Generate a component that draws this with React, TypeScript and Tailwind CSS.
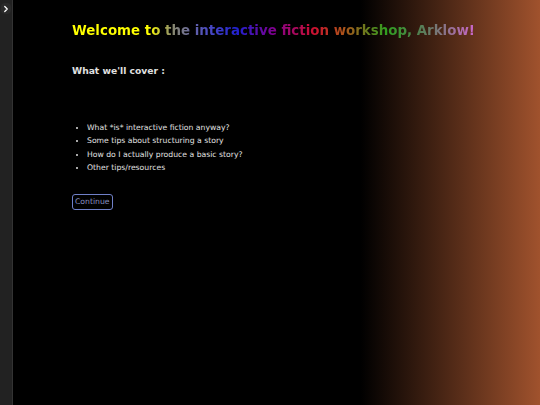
import { ChevronRight } from "lucide-react";

const topics = [
	"What *is* interactive fiction anyway?",
	"Some tips about structuring a story",
	"How do I actually produce a basic story?",
	"Other tips/resources",
];

function App() {
	return (
		<div className="flex h-[405px] w-[540px] overflow-hidden font-['DejaVu_Sans',sans-serif]">
			<aside className="w-[13px] shrink-0 border-r border-[#333] bg-[#222]">
				<button
					type="button"
					className="mt-[3px] ml-[1px] flex h-[11px] w-[10px] items-center justify-center rounded-sm bg-[#2a2a2a] text-white"
				>
					<ChevronRight size={10} strokeWidth={3} />
				</button>
			</aside>
			<main className="flex-1 bg-[linear-gradient(to_right,#000_0%,#000_66%,#a0522d_100%)] pl-[59px] pt-[22px]">
				<h1 className="w-fit bg-[linear-gradient(to_right,#ffff00_0%,#ffff00_19%,#888870_25%,#5050c0_33%,#2020d0_41%,#800090_50%,#cc1030_60%,#b0501a_67%,#30a020_78%,#508050_86%,#cc66cc_100%)] bg-clip-text text-[13.4px] leading-[18px] font-bold text-transparent">
					Welcome to the interactive fiction workshop, Arklow!
				</h1>
				<h2 className="mt-[25px] text-[9.2px] leading-[12px] font-bold text-[#e0e0e0]">What we'll cover :</h2>
				<ul className="mt-[44px] list-disc pl-[15px] text-[7.7px] leading-[13.4px] text-[#e0e0e0]">
					{topics.map((t) => (
						<li key={t}>{t}</li>
					))}
				</ul>
				<button
					type="button"
					className="mt-[19px] rounded-[3px] border border-[#7080c8] px-[2px] py-[2.5px] text-[7.7px] leading-[9px] text-[#8a90c0]"
				>
					Continue
				</button>
			</main>
		</div>
	);
}

export default App;
